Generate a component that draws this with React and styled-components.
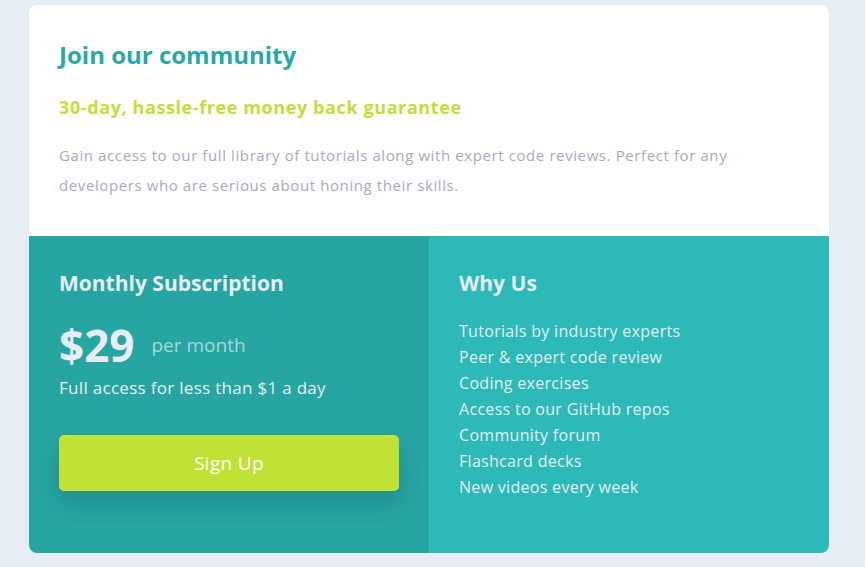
import React from 'react';
import styled, { createGlobalStyle } from 'styled-components';

const GlobalStyle = createGlobalStyle`
  body {
    margin: 0;
    background: #e6edf5;
    font-family: "Open Sans", Lato, sans-serif;
  }
`;

const Page = styled.div`
  display: flex;
  padding: 5px 0 14px 29px;
`;

const Card = styled.div`
  width: 800px;
  border-radius: 8px;
  overflow: hidden;
  background: white;
`;

const Top = styled.section`
  height: 231px;
  box-sizing: border-box;
  padding: 33px 30px 0;
`;

const Title = styled.h1`
  margin: 0;
  font-size: 24px;
  font-weight: 700;
  color: #2aa8a6;
`;

const Guarantee = styled.h2`
  margin: 24px 0 0;
  font-size: 18px;
  font-weight: 700;
  letter-spacing: 0.6px;
  color: #bfe036;
`;

const Intro = styled.p`
  margin: 21px 0 0;
  font-size: 15px;
  line-height: 30px;
  letter-spacing: 0.6px;
  color: #a6abc0;
`;

const Bottom = styled.div`
  display: grid;
  grid-template-columns: 1fr 1fr;
  height: 317px;
`;

const Column = styled.section`
  background: ${p => (p.$light ? '#2cb9b8' : '#27a5a2')};
  padding: 33px 30px 30px;
  color: #e6edf5;
`;

const ColTitle = styled.h3`
  margin: 0;
  font-size: 21px;
  font-weight: 700;
`;

const PriceRow = styled.div`
  display: flex;
  align-items: center;
  margin-top: 18px;
`;

const Price = styled.span`
  font-size: 44px;
  font-weight: 700;
`;

const Per = styled.span`
  margin-left: 17px;
  font-size: 19px;
  color: #a3d9d8;
`;

const Note = styled.p`
  margin: 1px 0 0;
  font-size: 17px;
  letter-spacing: 0.3px;
`;

const Button = styled.button`
  display: block;
  width: 340px;
  height: 56px;
  margin-top: 36px;
  border: none;
  border-radius: 5px;
  background: #bfe235;
  color: white;
  font-family: inherit;
  font-size: 19px;
  letter-spacing: 0.3px;
  box-shadow: 0 12px 20px rgba(20, 90, 90, 0.3);
`;

const List = styled.ul`
  list-style: none;
  margin: 21px 0 0;
  padding: 0;
`;

const Item = styled.li`
  font-size: 16px;
  line-height: 26px;
  letter-spacing: 0.3px;
`;

const reasons = [
  'Tutorials by industry experts',
  'Peer & expert code review',
  'Coding exercises',
  'Access to our GitHub repos',
  'Community forum',
  'Flashcard decks',
  'New videos every week',
];

export default function App() {
  return (
    <Page>
      <GlobalStyle />
      <Card>
        <Top>
          <Title>Join our community</Title>
          <Guarantee>30-day, hassle-free money back guarantee</Guarantee>
          <Intro>
            Gain access to our full library of tutorials along with expert code reviews. Perfect for any
            developers who are serious about honing their skills.
          </Intro>
        </Top>
        <Bottom>
          <Column>
            <ColTitle>Monthly Subscription</ColTitle>
            <PriceRow>
              <Price>$29</Price>
              <Per>per month</Per>
            </PriceRow>
            <Note>Full access for less than $1 a day</Note>
            <Button>Sign Up</Button>
          </Column>
          <Column $light>
            <ColTitle>Why Us</ColTitle>
            <List>
              {reasons.map(r => (
                <Item key={r}>{r}</Item>
              ))}
            </List>
          </Column>
        </Bottom>
      </Card>
    </Page>
  );
}
